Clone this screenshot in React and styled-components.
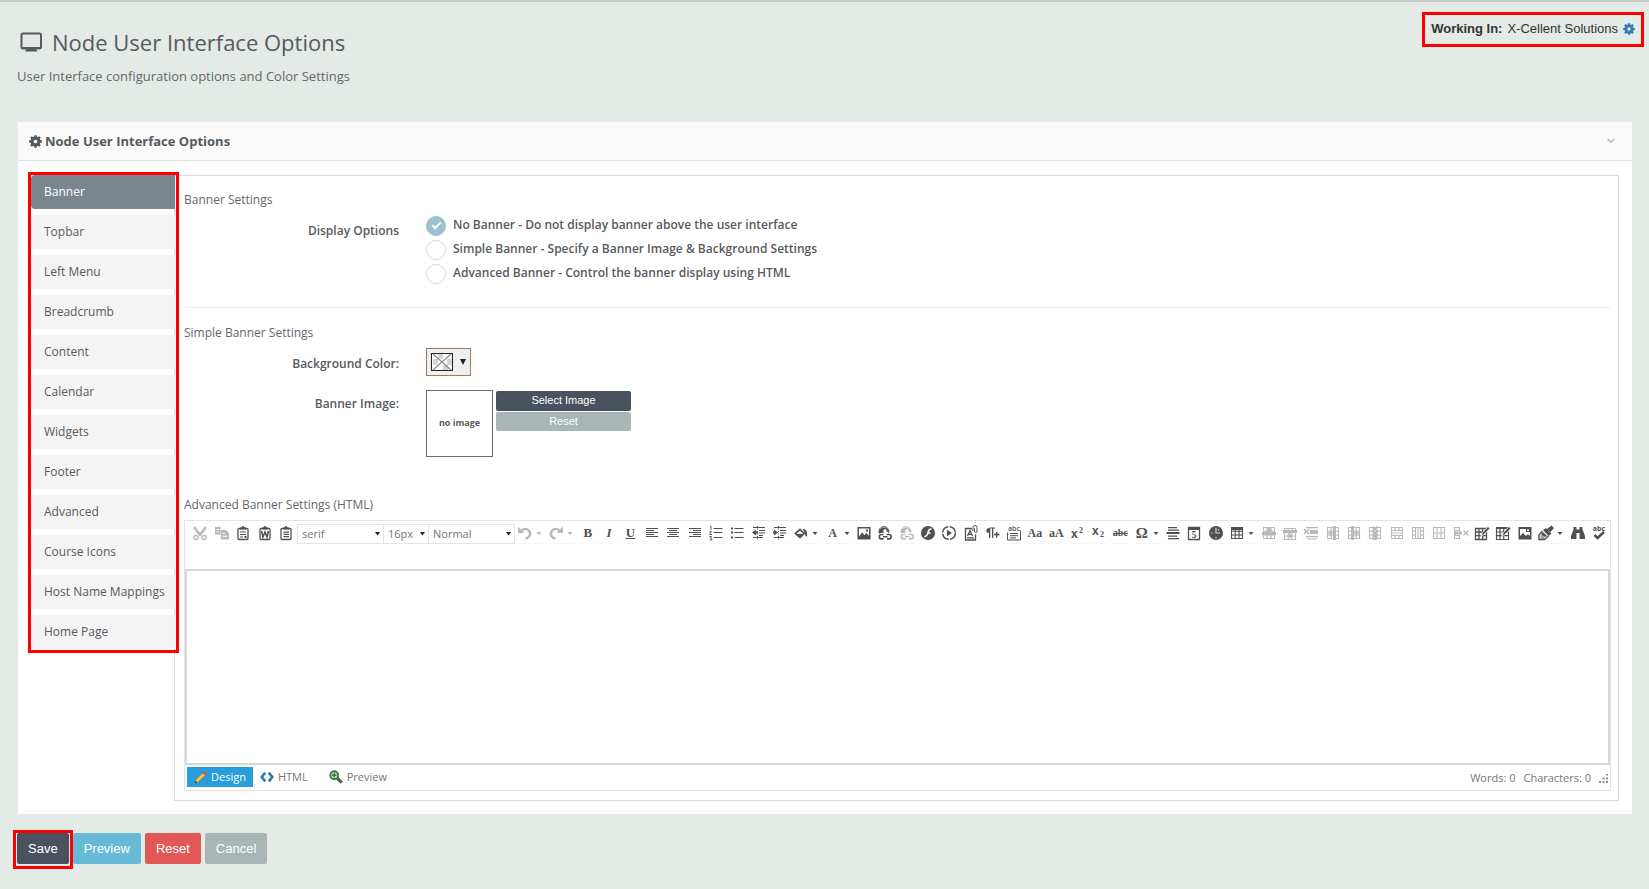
import React, { useState } from "react";
import styled, { createGlobalStyle } from "styled-components";

const sans = '"Open Sans", "Noto Sans", sans-serif';
const arial = '"Liberation Sans", Arial, sans-serif';
const serif = '"Liberation Serif", "Times New Roman", serif';

const GlobalStyle = createGlobalStyle`
  *, *::before, *::after { box-sizing: border-box; }
  body {
    margin: 0;
    background: #e4eae5;
    color: #575a5e;
    font: 12px/20px ${sans};
  }
  button, input, select, textarea { font: inherit; color: inherit; margin: 0; }
`;

const Page = styled.div`
  border-top: 2px solid #c9cdca;
`;

const Header = styled.header`
  display: flex;
  justify-content: space-between;
  align-items: flex-start;
  padding: 10px 5px 36px 17px;
`;

const Heading = styled.div`
  padding-top: 15px;
`;

const PageTitle = styled.h1`
  display: flex;
  align-items: center;
  gap: 9px;
  margin: 0 0 9px;
  padding-left: 3px;
  font-size: 22px;
  line-height: 30px;
  font-weight: 400;
`;

const Subtitle = styled.p`
  margin: 0;
  font-size: 13px;
  line-height: 20px;
  font-weight: 400;
  color: #64676b;
`;

const WorkingIn = styled.div`
  display: flex;
  align-items: center;
  gap: 5px;
  height: 35px;
  padding: 0 6px 2px;
  border: 3px solid #ff0000;
  font: 13px/20px ${arial};
  color: #333;
  white-space: nowrap;
`;

const GearLink = styled.a`
  display: flex;
  color: #337ab7;
`;

const Panel = styled.section`
  margin: 0 17px 0 18px;
  background: #fff;
`;

const PanelHeader = styled.div`
  display: flex;
  align-items: center;
  height: 39px;
  padding: 0 16px 0 11px;
  background: #fafafa;
  border-bottom: 1px solid #dfe1df;
`;

const PanelTitle = styled.h2`
  flex: 1;
  display: flex;
  align-items: center;
  gap: 3px;
  margin: 0;
  font-size: 13px;
  line-height: 20px;
  font-weight: 700;
`;

const CollapseButton = styled.button`
  display: flex;
  padding: 0;
  border: 0;
  background: none;
  color: #c6c6c6;
`;

const PanelBody = styled.div`
  display: flex;
  align-items: flex-start;
  padding: 11px 13px 13px 10px;
`;

const Tabs = styled.nav`
  position: relative;
  z-index: 1;
  flex: none;
  display: flex;
  flex-direction: column;
  gap: 6px;
  width: 151px;
  margin-right: -5px;
  padding-right: 1px;
  padding-bottom: 1px;
  border: 3px solid #ff0000;
`;

const Tab = styled.a`
  height: 34px;
  padding: 0 13px;
  border-radius: 4px 0 0 4px;
  line-height: 33px;
  text-decoration: none;
  white-space: nowrap;
  color: ${(p) => (p.$active ? "#fff" : "#575a5e")};
  background: ${(p) => (p.$active ? "#7a868e" : "#f4f4f4")};
`;

const Content = styled.div`
  flex: 1;
  min-width: 0;
  margin-top: 3px;
  padding: 14px 7px 9px 9px;
  border: 1px solid #d9dbdc;
`;

const SectionTitle = styled.h3`
  margin: 0 0 ${(p) => p.$gap || 5}px;
  font-size: 12px;
  line-height: 20px;
  font-weight: 400;
  color: #64676b;
`;

const Divider = styled.hr`
  margin: 21px 1px 15px 0;
  border: 0;
  border-top: 1px solid #eee;
`;

const FormRow = styled.div`
  display: grid;
  grid-template-columns: 215px 1fr;
  column-gap: 27px;
  margin-bottom: ${(p) => p.$below || 0}px;
`;

const FieldLabel = styled.div`
  padding-top: ${(p) => p.$top}px;
  text-align: right;
  font-weight: 600;
`;

const RadioList = styled.div`
  display: flex;
  flex-direction: column;
`;

const RadioLabel = styled.label`
  display: flex;
  align-items: center;
  gap: 7px;
  height: 24px;
  font-weight: 600;
  span { padding-bottom: 3px; }
`;

const Radio = styled.input`
  appearance: none;
  display: grid;
  place-items: center;
  width: 20px;
  height: 20px;
  border: 1px solid #d9dad5;
  border-radius: 50%;
  background: #fff;
  &:checked { background: #99c2cc; border-color: #99c2cc; }
  &:checked::before {
    content: "";
    width: 9px;
    height: 5px;
    margin-bottom: 3px;
    border: solid #fff;
    border-width: 0 0 2px 2px;
    transform: rotate(-45deg);
  }
`;

const ColorButton = styled.button`
  display: flex;
  align-items: center;
  gap: 7px;
  width: 45px;
  height: 28px;
  padding: 0 4px;
  border: 1px solid #9c7b5f;
  background: #efefef;
`;

const ImageField = styled.div`
  display: flex;
  gap: 3px;
`;

const ImageBox = styled.div`
  display: grid;
  place-items: center;
  width: 67px;
  height: 67px;
  padding-bottom: 2px;
  border: 1px solid #6c6c6c;
  font-size: 9px;
  line-height: 12px;
  font-weight: 700;
`;

const ImageButtons = styled.div`
  display: flex;
  flex-direction: column;
  gap: 1px;
  padding-top: 1px;
`;

const SmallButton = styled.button`
  width: 135px;
  height: ${(p) => (p.$dark ? 20 : 19)}px;
  padding: 0 0 2px;
  border: 0;
  border-radius: 2px;
  font: 11px/16px ${arial};
  color: #fff;
  background: ${(p) => (p.$dark ? "#4b525f" : "#aab5b5")};
`;

const Editor = styled.div`
  display: flex;
  flex-direction: column;
  border: 1px solid #e4e4e4;
`;

const Toolbar = styled.div`
  display: flex;
  align-items: flex-start;
  height: 48px;
  padding: 3px 3px 0 7px;
`;

const ToolGroup = styled.div`
  display: flex;
  justify-content: space-between;
  flex: ${(p) => (p.$grow ? "1" : "0 0 102px")};
  margin: ${(p) => (p.$grow ? "0 0 0 3px" : "0 3px 0 0")};
`;

const Tool = styled.button`
  display: flex;
  align-items: center;
  width: ${(p) => (p.$split ? 26 : 16)}px;
  height: 20px;
  padding: 0 0 2px;
  border: 0;
  border-bottom: 1px solid #f7f7f7;
  background: none;
  color: ${(p) => (p.$off ? "#b9b9b9" : "#505050")};
  svg { flex: none; overflow: visible; }
`;

const Glyph = styled.span`
  flex: none;
  width: 16px;
  text-align: center;
  white-space: nowrap;
  font: ${(p) => (p.$italic ? "italic " : "")}bold ${(p) => p.$size || 13}px/16px ${serif};
  text-decoration: ${(p) => p.$line || "none"};
`;

const SelectWrap = styled.label`
  display: flex;
  align-items: center;
  width: ${(p) => p.$width}px;
  height: 20px;
  padding-right: 3px;
  border: 1px solid #e4e4e4;
  margin-right: -1px;
  background: #fff;
  svg { flex: none; }
`;

const Select = styled.select`
  appearance: none;
  flex: 1;
  min-width: 0;
  padding: 0 0 0 4px;
  border: 0;
  background: none;
  font-size: 11px;
  line-height: 18px;
  color: #767676;
`;

const EditorArea = styled.textarea`
  display: block;
  height: 196px;
  resize: none;
  border: 2px solid #d8d8d8;
  background: #fff;
`;

const EditorFooter = styled.div`
  display: flex;
  align-items: flex-start;
  height: 25px;
  padding: 2px 2px 0 2px;
  font-size: 11px;
  color: #767676;
`;

const ModeButton = styled.button`
  display: flex;
  align-items: center;
  gap: 4px;
  height: 20px;
  margin-right: ${(p) => (p.$active ? 1 : 9)}px;
  padding: 0 ${(p) => (p.$active ? 7 : 6)}px;
  border: 0;
  color: ${(p) => (p.$active ? "#fff" : "#767676")};
  background: ${(p) => (p.$active ? "#279edb" : "none")};
`;

const Counts = styled.div`
  display: flex;
  align-items: center;
  gap: 8px;
  margin-left: auto;
  padding-top: 1px;
`;

const Actions = styled.div`
  display: flex;
  align-items: flex-start;
  padding: 16px 13px 18px;
`;

const SaveFrame = styled.div`
  padding: 0 1px 2px;
  border: 3px solid #ff0000;
`;

const ActionRow = styled.div`
  display: flex;
  gap: 4px;
  padding-top: 3px;
`;

const ActionButton = styled.button`
  height: 31px;
  padding: 0 11px;
  border: 0;
  border-radius: 2px;
  font: 13px/20px ${arial};
  color: #fff;
  background: ${(p) => p.$color};
`;

const Svg = ({ size = 16, children, ...rest }) => (
  <svg width={size} height={size} viewBox="0 0 16 16" fill="currentColor" aria-hidden="true" {...rest}>
    {children}
  </svg>
);

const Gear = ({ size }) => (
  <Svg size={size}>
    <circle cx="8" cy="8" r="4.2" fill="none" stroke="currentColor" strokeWidth="3.8" />
    {[0, 45, 90, 135, 180, 225, 270, 315].map((a) => (
      <path key={a} d="M6.2 3L6.600 0.2h2.800L9.800 3z" transform={`rotate(${a} 8 8)`} />
    ))}
  </Svg>
);

const Caret = () => (
  <svg width="10" height="16" viewBox="0 0 10 16" aria-hidden="true">
    <path d="M3.500 7h5L6 10z" fill="currentColor" />
  </svg>
);

const SelectCaret = () => (
  <svg width="5" height="4" viewBox="0 0 5 4" aria-hidden="true">
    <path d="M0 0h5L2.5 3.5z" fill="#222" />
  </svg>
);

const Lines = ({ d }) => <path d={d} fill="none" stroke="currentColor" strokeWidth="1.2" />;

const Clip = ({ children }) => (
  <Svg>
    <path d="M3 4.500q0-1 1-1h8q1 0 1 1v9q0 1-1 1H4q-1 0-1-1z" fill="none" stroke="currentColor" strokeWidth="1.3" />
    <path d="M5 4.500V2.500h1.500a1.500 1.500 0 0 1 3 0H11v2z" />
    {children}
  </Svg>
);

const GridIcon = ({ fill, mark, x = 2, y = 2 }) => (
  <Svg>
    <path d={`M${x}.5 ${y}.5h11v11h-11zM${x}.5 ${y + 4}.2h11M${x}.5 ${y + 8}h11M${x + 4}.2 ${y}.5v11M${x + 8} ${y}.5v11`} fill="none" stroke="currentColor" strokeWidth="1.1" />
    {fill && <path d={fill} />}
    {mark && <path d={mark} fill="none" stroke="currentColor" strokeWidth="1.5" />}
  </Svg>
);

const Pencil = () => (
  <path d="M7 11l1-3 6-6.500 2 2-6.500 6.300z" fill="currentColor" stroke="#fff" strokeWidth="0.8" />
);

const Picture = () => (
  <Svg>
    <path fillRule="evenodd" d="M1.500 2h13v12.500h-13zM3 3.500v8l3-4 2.500 2.500 2-2L13 11V3.500zM10 4.500h2v2h-2z" />
  </Svg>
);

const Globe = () => (
  <>
    <path d="M2 8a5 5 0 0 1 10-1l-2-.2-1.500-3L6 5.500l1 2-3 .5z" />
    <path d="M2.300 8.500a5 5 0 1 1 9.400-.5" fill="none" stroke="currentColor" />
    <path d="M6.500 9.500H4.500a2.200 2.200 0 0 0 0 4.400h2M9.500 9.500h2.500a2.200 2.200 0 0 1 0 4.400H10M6 11.700h4.500" fill="none" stroke="currentColor" strokeWidth="1.600" />
  </>
);

const clipTools = [
  { name: "Cut", off: true, icon: <Svg><path d="M2 2l6.500 8.500M14 2L7.500 10.500" stroke="currentColor" strokeWidth="2.300" /><circle cx="4" cy="12.500" r="2" fill="none" stroke="currentColor" strokeWidth="1.400" /><circle cx="12" cy="12.500" r="2" fill="none" stroke="currentColor" strokeWidth="1.400" /></Svg> },
  { name: "Copy", off: true, icon: <Svg><path fillRule="evenodd" d="M1 2h5.500v7.500H1zM2.500 4v1H5V4zM2.500 6.500v1H5v-1z" /><path fillRule="evenodd" d="M7 5h5l3 3v6.500H7zM8.500 8v1H11V8zM8.500 10.800v1h5v-1z" /></Svg> },
  { name: "Paste", icon: <Clip><path d="M5 6.500h6v1H5zM5 9h6v1H5zM5 11.500h3v1H5zM9.500 11h2v2h-2z" /></Clip> },
  { name: "Paste from Word", icon: <Clip><path d="M4.500 6l1.500 6 2-5 2 5 1.500-6" fill="none" stroke="currentColor" strokeWidth="1.500" /></Clip> },
  { name: "Paste plain text", icon: <Clip><path d="M5.500 6.500h5.500v1.200H5.500zM5.500 8.800h5.500V10H5.500zM5.500 11h5.500v1.200H5.500z" /></Clip> },
];

const tools = [
  { name: "Undo", off: true, split: true, icon: <Svg><path d="M4 6a5 4.800 0 1 1 4.500 7.500" fill="none" stroke="currentColor" strokeWidth="2.400" /><path d="M1 1.500v6.500h6.500z" /></Svg> },
  { name: "Redo", off: true, split: true, icon: <Svg><path d="M12 6a5 4.800 0 1 0-4.500 7.500" fill="none" stroke="currentColor" strokeWidth="2.400" /><path d="M15 1.500v6.500H8.500z" /></Svg> },
  { name: "Bold", icon: <Glyph>B</Glyph> },
  { name: "Italic", icon: <Glyph $italic>I</Glyph> },
  { name: "Underline", icon: <Glyph $line="underline">U</Glyph> },
  { name: "Align left", icon: <Svg><Lines d="M2 3.500h12M2 5.500h8M2 7.500h12M2 9.500h8M2 11.500h12" /></Svg> },
  { name: "Align center", icon: <Svg><Lines d="M2 3.500h12M4 5.500h8M2 7.500h12M4 9.500h8M2 11.500h12" /></Svg> },
  { name: "Align right", icon: <Svg><Lines d="M2 3.500h12M6 5.500h8M2 7.500h12M6 9.500h8M2 11.500h12" /></Svg> },
  { name: "Numbered list", icon: <Svg><Lines d="M5.500 3.500h9M5.500 7.500h9M5.500 12.500h9" /><path d="M2 1.500l1-.5v4M1.500 6.500h2L1.500 9.500h2.500M1.500 11.500h2L2.500 13q2 0 1 2H1.500" fill="none" stroke="currentColor" strokeWidth="0.900" /></Svg> },
  { name: "Bulleted list", icon: <Svg><Lines d="M5.500 3.500h9M5.500 7.500h9M5.500 12.500h9" /><path d="M2 2.500h2v2H2zM2 6.500h2v2H2zM2 11.500h2v2H2z" /></Svg> },
  { name: "Outdent", icon: <Svg><Lines d="M2 2.500h12M8 5.500h6M8 8h6M8 10.500h4M2 12.500h10" /><path d="M1 7.500l4-3v2h2v2H5v2z" /><path d="M6.500 1v14" stroke="currentColor" strokeDasharray="1 1.500" /></Svg> },
  { name: "Indent", icon: <Svg><Lines d="M2 2.500h12M8 5.500h6M8 8h6M8 10.500h4M2 12.500h10" /><path d="M6 7.500L2 4.500v2H1v2h1v2z" /><path d="M6.500 1v14" stroke="currentColor" strokeDasharray="1 1.500" /></Svg> },
  { name: "Background color", split: true, icon: <Svg><path d="M2.500 8.500L7 4.500l4 4-4 4z" fill="none" stroke="currentColor" strokeWidth="1.700" /><path d="M4 9h6l-3 3zM9.500 3.500q4.500 1 4.500 4.500v4l-2-2V8.500z" /></Svg> },
  { name: "Text color", split: true, icon: <Glyph $size={12}>A</Glyph> },
  { name: "Insert image", icon: <Picture /> },
  { name: "Insert link", icon: <Svg><Globe /></Svg> },
  { name: "Remove link", off: true, icon: <Svg><Globe /></Svg> },
  { name: "Insert Flash", icon: <Svg><circle cx="8" cy="8" r="7" /><path d="M11.500 4Q8.500 4 8 7.500T4.500 12M7.500 8h3" fill="none" stroke="#fff" strokeWidth="1.500" /></Svg> },
  { name: "Insert media", icon: <Svg><circle cx="8" cy="8" r="6.300" fill="none" stroke="currentColor" strokeWidth="1.500" strokeDasharray="8.400 1.500" /><path d="M6 4.800L11 8l-5 3.200z" /></Svg> },
  { name: "Insert document", icon: <Svg><path d="M9 3.500H2.500v11.500h10V9.500" fill="none" stroke="currentColor" strokeWidth="1.300" /><path d="M4 12.800h7M4.500 11L7 5.500 9.500 11M5.500 9.300h3" fill="none" stroke="currentColor" strokeWidth="1.200" /><path d="M10 6V2.500a2 2 0 0 1 4 0V7a1.500 1.500 0 0 1-2.500 0V3.500" fill="none" stroke="currentColor" /></Svg> },
  { name: "Insert paragraph", icon: <Svg><path d="M6.500 3.500a3 3 0 0 0-3 0 2.500 2.500 0 0 0 0 4.300h1.500V13h1.300V3.500h1.700V13h1.300V3.500H11V2.500H5z" /><path d="M10 9.500h5.500M12.700 7v5.500" stroke="currentColor" strokeWidth="1.500" /></Svg> },
  { name: "Insert template", icon: <Svg><text x="8" y="6" textAnchor="middle" fontSize="7" fontFamily="Open Sans, sans-serif" fontWeight="600">abc</text><path d="M1.500 7.500v7.500h13V5.500M4 8.500h8M4 10.700h8M4 12.900h6" fill="none" stroke="currentColor" /></Svg> },
  { name: "Lower case", icon: <Glyph $size={12}>Aa</Glyph> },
  { name: "Upper case", icon: <Glyph $size={12}>aA</Glyph> },
  { name: "Superscript", icon: <Svg><text x="1" y="13" fontSize="12" fontFamily="Liberation Sans, sans-serif" fontWeight="700">x</text><text x="9" y="8" fontSize="8" fontFamily="Liberation Serif, serif" fontWeight="700">2</text></Svg> },
  { name: "Subscript", icon: <Svg><text x="1" y="10" fontSize="12" fontFamily="Liberation Sans, sans-serif" fontWeight="700">x</text><text x="9" y="12" fontSize="8" fontFamily="Liberation Serif, serif" fontWeight="700">2</text></Svg> },
  { name: "Strikethrough", icon: <Glyph $size={10} $line="line-through">abc</Glyph> },
  { name: "Symbol", split: true, icon: <Glyph $size={15}>Ω</Glyph> },
  { name: "Horizontal rule", icon: <Svg><path d="M3 2h9v1.200H3zM3 4.500h11v1.200H3zM1.500 7h13v2h-13zM3 10.500h9v1.200H3zM3 13h11v1.200H3z" /></Svg> },
  { name: "Insert date", icon: <Svg><path d="M2.500 2.500h11v12h-11z" fill="none" stroke="currentColor" strokeWidth="1.300" /><path d="M2 2h12v3H2z" /><text x="8" y="13" textAnchor="middle" fontSize="10" fontFamily="Liberation Serif, serif" fontWeight="700">5</text></Svg> },
  { name: "Insert time", icon: <Svg><circle cx="8" cy="8" r="7" /><path d="M8 3v5h4M8 12v1.500M3 8h1.500M11 4.500l-1 1" fill="none" stroke="#d5d5d5" strokeWidth="1.200" /></Svg> },
  { name: "Insert table", split: true, icon: <GridIcon fill="M2 2h12v3H2z" /> },
  { name: "Row above", off: true, icon: <GridIcon fill="M1 7h14v3H1zM7 3h2v5H7z" mark="M5.500 5h5" /> },
  { name: "Row below", off: true, icon: <GridIcon y={3} fill="M1 5h14v3H1z" mark="M8 8v5M5.500 11h5" /> },
  { name: "Delete row", off: true, icon: <Svg><path d="M1 4l5 5M6 4L1 9" stroke="currentColor" strokeWidth="1.500" /><path d="M7 5h8v4H7zM3 2h12v1.300H3zM3 11h12v1.300H3zM4 13.500h10v1H4z" /></Svg> },
  { name: "Column left", off: true, icon: <GridIcon fill="M8 1h3v14H8z" mark="M3 8h5M5.500 5.500v5" /> },
  { name: "Column right", off: true, icon: <GridIcon fill="M5 1h3v14H5z" mark="M8 8h5M10.500 5.500v5" /> },
  { name: "Delete column", off: true, icon: <GridIcon fill="M6 7h4v8H6z" mark="M5.500 1.500l5 5M10.500 1.500l-5 5" /> },
  { name: "Merge columns", off: true, icon: <Svg><path d="M2.500 2.500h11v11h-11zM2 5.500h12M2 8h12M2 10.500h12M6 2v3.500M10 2v3.500M6 10.500V14M10 10.500V14" fill="none" stroke="currentColor" strokeWidth="1.100" /></Svg> },
  { name: "Merge rows", off: true, icon: <Svg><path d="M2.500 2.500h11v11h-11zM5.500 2v12M10.500 2v12M2 6h3.500M2 10h3.500M10.500 6H14M10.500 10H14M8 2v12" fill="none" stroke="currentColor" strokeWidth="1.100" /></Svg> },
  { name: "Split cell", off: true, icon: <Svg><path d="M2.500 2.500h11v11h-11zM6 2v12M10 2v12M2 8h12" fill="none" stroke="currentColor" strokeWidth="1.100" /></Svg> },
  { name: "Delete cell", off: true, icon: <Svg><path d="M1.500 2.500h5v3h-5zM1.500 10.500h5v3h-5zM1.500 5.500v5" fill="none" stroke="currentColor" strokeWidth="1.200" /><path d="M2 6.500h7v3H2z" /><path d="M10.500 5.500l5 5M15.500 5.500l-5 5" stroke="currentColor" strokeWidth="1.400" /></Svg> },
  { name: "Cell properties", icon: <Svg><path d="M1.500 3.500h11v11h-11zM1.500 7h11M1.500 10.700h11M5 3.500v11M8.700 3.500v11" fill="none" stroke="currentColor" strokeWidth="1.300" /><Pencil /></Svg> },
  { name: "Table properties", icon: <Svg><path d="M1.500 2.500h12v12h-12zM1.500 7h12M1.500 10.700h12M5 3.500v11M8.700 3.500v11" fill="none" stroke="currentColor" strokeWidth="1.200" /><path d="M1 2h13v2H1z" /><Pencil /></Svg> },
  { name: "Image properties", icon: <Svg><path fillRule="evenodd" d="M1.500 2h13v12.500h-13zM3 4v7l3-3 3 3 2-2 2 2V7H9V4z" /><path d="M10 4.500h2v1.500h-2z" fill="#fff" /></Svg> },
  { name: "Format painter", split: true, icon: <Svg><path d="M9 4l4.500-3.500L16 3l-3.500 4zM5 5l3-2 5.500 5.500-3 2.500z" /><path d="M4.500 6l-3.500 4v4.500h5.500l4-3.500" fill="none" stroke="currentColor" strokeWidth="1.400" /><path d="M2.500 10.500h4v1h-4zM2.500 12.500h4v1h-4zM5 7l4 4-2 1-4-3z" /></Svg> },
  { name: "Find", icon: <Svg><path d="M3.500 2h3v2.500H9.500V2h3v2.500L15 11v3H9.500V8h-3v6H1v-3l2.500-6.500z" /></Svg> },
  { name: "Spell check", icon: <Svg><text x="8" y="6" textAnchor="middle" fontSize="7" fontFamily="Open Sans, sans-serif" fontWeight="700">abc</text><path d="M3.500 10l3 3L13 7" fill="none" stroke="currentColor" strokeWidth="2.500" /></Svg> },
];

const tabs = [
  "Banner", "Topbar", "Left Menu", "Breadcrumb", "Content", "Calendar",
  "Widgets", "Footer", "Advanced", "Course Icons", "Host Name Mappings", "Home Page",
];

const bannerOptions = [
  "No Banner - Do not display banner above the user interface",
  "Simple Banner - Specify a Banner Image & Background Settings",
  "Advanced Banner - Control the banner display using HTML",
];

const selects = [
  { label: "Font", value: "serif", width: 87 },
  { label: "Size", value: "16px", width: 46 },
  { label: "Style", value: "Normal", width: 87 },
];

const ToolButton = ({ tool }) => (
  <Tool type="button" aria-label={tool.name} $split={tool.split} $off={tool.off}>
    {tool.icon}
    {tool.split && <Caret />}
  </Tool>
);

export default function App() {
  const [activeTab, setActiveTab] = useState("Banner");
  const [option, setOption] = useState(0);

  return (
    <Page>
      <GlobalStyle />
      <Header>
        <Heading>
          <PageTitle>
            <svg width="23" height="20" viewBox="0 0 23 20" aria-hidden="true">
              <rect x="1.500" y="1.500" width="19.500" height="15" rx="1.500" fill="none" stroke="currentColor" strokeWidth="2" />
              <path d="M3 15h17v2H3zM6.500 17h9.500l1.500 2.500H5z" fill="currentColor" />
            </svg>
            Node User Interface Options
          </PageTitle>
          <Subtitle>User Interface configuration options and Color Settings</Subtitle>
        </Heading>
        <WorkingIn>
          <strong>Working In:</strong>
          <span>X-Cellent Solutions</span>
          <GearLink href="#node" aria-label="Change node"><Gear size={12} /></GearLink>
        </WorkingIn>
      </Header>

      <Panel>
        <PanelHeader>
          <PanelTitle><Gear size={13} />Node User Interface Options</PanelTitle>
          <CollapseButton type="button" aria-label="Collapse">
            <svg width="10" height="6" viewBox="0 0 10 6" aria-hidden="true">
              <path d="M1.500 1L5 4l3.500-3" fill="none" stroke="currentColor" strokeWidth="1.800" />
            </svg>
          </CollapseButton>
        </PanelHeader>
        <PanelBody>
          <Tabs>
            {tabs.map((t) => (
              <Tab key={t} href="#tab" $active={t === activeTab} onClick={() => setActiveTab(t)}>{t}</Tab>
            ))}
          </Tabs>
          <Content>
            <SectionTitle $gap={4}>Banner Settings</SectionTitle>
            <FormRow>
              <FieldLabel $top={7} id="display-options">Display Options</FieldLabel>
              <RadioList role="radiogroup" aria-labelledby="display-options">
                {bannerOptions.map((text, i) => (
                  <RadioLabel key={text}>
                    <Radio type="radio" name="banner" checked={option === i} onChange={() => setOption(i)} />
                    <span>{text}</span>
                  </RadioLabel>
                ))}
              </RadioList>
            </FormRow>
            <Divider />
            <SectionTitle>Simple Banner Settings</SectionTitle>
            <FormRow $below={14}>
              <FieldLabel $top={6} as="label" htmlFor="background-color">Background Color:</FieldLabel>
              <ColorButton type="button" id="background-color">
                <svg width="22" height="18" viewBox="0 0 22 18" aria-hidden="true">
                  <rect x="0.500" y="0.500" width="21" height="17" fill="#fff" stroke="#222" />
                  <path d="M7 1h5v5H7zM2 6h5v6H2zM12 12h5v5h-5zM16 6h5v6h-5z" fill="#d4d4d4" />
                  <path d="M2 1l18 16M20 1L2 17" stroke="#8b8b8b" strokeWidth="1.200" />
                </svg>
                <svg width="6" height="6" viewBox="0 0 6 6" aria-hidden="true">
                  <path d="M0 0h6L3 6z" fill="#222" />
                </svg>
              </ColorButton>
            </FormRow>
            <FormRow $below={38}>
              <FieldLabel $top={4}>Banner Image:</FieldLabel>
              <ImageField>
                <ImageBox>no image</ImageBox>
                <ImageButtons>
                  <SmallButton type="button" $dark>Select Image</SmallButton>
                  <SmallButton type="button">Reset</SmallButton>
                </ImageButtons>
              </ImageField>
            </FormRow>
            <SectionTitle>Advanced Banner Settings (HTML)</SectionTitle>
            <Editor>
              <Toolbar>
                <ToolGroup>
                  {clipTools.map((t) => <ToolButton key={t.name} tool={t} />)}
                </ToolGroup>
                {selects.map((s) => (
                  <SelectWrap key={s.label} $width={s.width}>
                    <Select aria-label={s.label} defaultValue={s.value}>
                      <option>{s.value}</option>
                    </Select>
                    <SelectCaret />
                  </SelectWrap>
                ))}
                <ToolGroup $grow>
                  {tools.map((t) => <ToolButton key={t.name} tool={t} />)}
                </ToolGroup>
              </Toolbar>
              <EditorArea aria-label="Banner HTML" />
              <EditorFooter>
                <ModeButton type="button" $active>
                  <Svg size={13}>
                    <path d="M1 15l1.500-4.500L11 2l3 3-8.500 8.500z" fill="#f3c14b" stroke="#a8752a" strokeWidth="0.800" />
                    <path d="M11 2l1.500-1.500 3 3L14 5z" fill="#d8434f" />
                    <path d="M1 15l1-3 2 2z" fill="#333" />
                  </Svg>
                  Design
                </ModeButton>
                <ModeButton type="button">
                  <Svg size={14}>
                    <path d="M6 3L2 8l4 5M10 3l4 5-4 5" fill="none" stroke="#2a7ab8" strokeWidth="3" />
                  </Svg>
                  HTML
                </ModeButton>
                <ModeButton type="button">
                  <Svg size={14}>
                    <path d="M9 9l5.500 5.500" stroke="#555" strokeWidth="3.500" />
                    <circle cx="6" cy="6" r="4.500" fill="#cfe6c8" stroke="#3f7a44" strokeWidth="2.200" />
                    <path d="M6 3.500v5M3.500 6h5" stroke="#2f7a35" strokeWidth="1.800" />
                  </Svg>
                  Preview
                </ModeButton>
                <Counts>
                  <span>Words: 0</span>
                  <span>Characters: 0</span>
                  <svg width="9" height="9" viewBox="0 0 9 9" fill="#8a8a8a" aria-hidden="true">
                    <path d="M7 0h2v1.500H7zM7 3.500h2v2H7zM3.500 3.500h2v2h-2zM7 7h2v2H7zM3.500 7h2v2h-2zM0 7h2v2H0z" />
                  </svg>
                </Counts>
              </EditorFooter>
            </Editor>
          </Content>
        </PanelBody>
      </Panel>

      <Actions>
        <SaveFrame><ActionButton type="button" $color="#4b525f">Save</ActionButton></SaveFrame>
        <ActionRow>
          <ActionButton type="button" $color="#66bad7">Preview</ActionButton>
          <ActionButton type="button" $color="#e25856">Reset</ActionButton>
          <ActionButton type="button" $color="#aab5b5">Cancel</ActionButton>
        </ActionRow>
      </Actions>
    </Page>
  );
}
